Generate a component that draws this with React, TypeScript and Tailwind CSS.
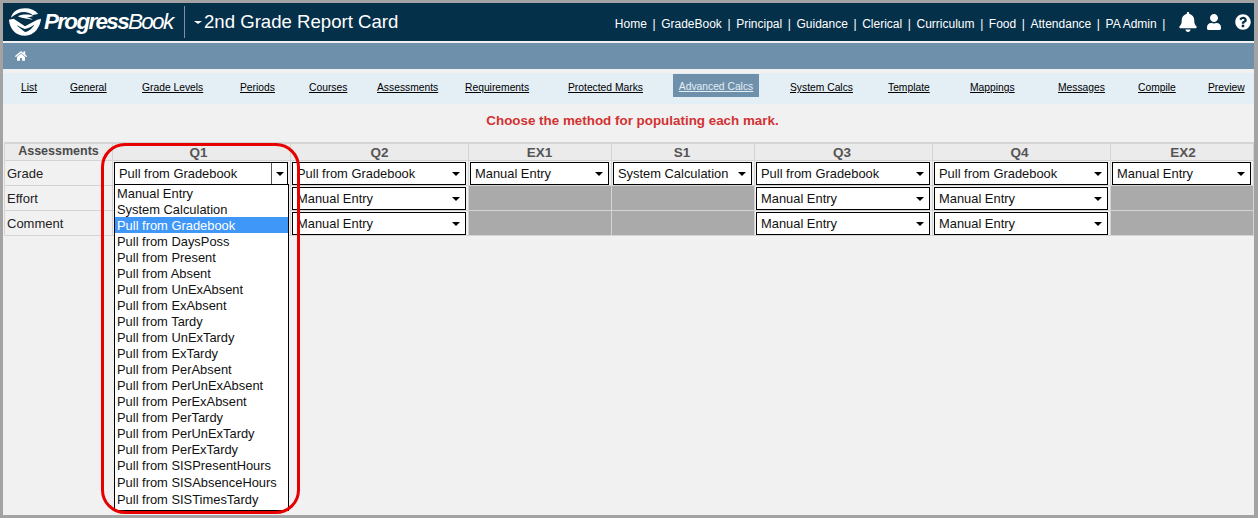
import { FaBell, FaHome, FaQuestionCircle, FaUser } from 'react-icons/fa';

const navLinks = ['Home', 'GradeBook', 'Principal', 'Guidance', 'Clerical', 'Curriculum', 'Food', 'Attendance', 'PA Admin'];

const tabs = [
  { label: 'List', className: 'w-[49px]' },
  { label: 'General', className: 'w-[72px]' },
  { label: 'Grade Levels', className: 'w-[98px]' },
  { label: 'Periods', className: 'w-[69px]' },
  { label: 'Courses', className: 'w-[68px]' },
  { label: 'Assessments', className: 'w-[88px]' },
  { label: 'Requirements', className: 'w-[103px]' },
  { label: 'Protected Marks', className: 'w-[110px]' },
  { label: 'Advanced Calcs', className: 'w-[112px]', active: true },
  { label: 'System Calcs', className: 'w-[98px]' },
  { label: 'Template', className: 'w-[82px]' },
  { label: 'Mappings', className: 'w-[88px]' },
  { label: 'Messages', className: 'w-[80px]' },
  { label: 'Compile', className: 'w-[70px]' },
  { label: 'Preview', className: 'w-[40px]' },
];

const columns = [
  { name: 'Q1', grade: 'Pull from Gradebook', rest: true, nudge: 'pr-[6px]' },
  { name: 'Q2', grade: 'Pull from Gradebook', rest: true, nudge: '' },
  { name: 'EX1', grade: 'Manual Entry', rest: false, nudge: 'pr-[1px]' },
  { name: 'S1', grade: 'System Calculation', rest: false, nudge: 'pr-[2px]' },
  { name: 'Q3', grade: 'Pull from Gradebook', rest: true, nudge: 'pr-[3px]' },
  { name: 'Q4', grade: 'Pull from Gradebook', rest: true, nudge: 'pr-[4px]' },
  { name: 'EX2', grade: 'Manual Entry', rest: false, nudge: 'pl-[2px]' },
];

const options = [
  'Manual Entry',
  'System Calculation',
  'Pull from Gradebook',
  'Pull from DaysPoss',
  'Pull from Present',
  'Pull from Absent',
  'Pull from UnExAbsent',
  'Pull from ExAbsent',
  'Pull from Tardy',
  'Pull from UnExTardy',
  'Pull from ExTardy',
  'Pull from PerAbsent',
  'Pull from PerUnExAbsent',
  'Pull from PerExAbsent',
  'Pull from PerTardy',
  'Pull from PerUnExTardy',
  'Pull from PerExTardy',
];

const sisOptions = ['Pull from SISPresentHours', 'Pull from SISAbsenceHours', 'Pull from SISTimesTardy'];

function Logo() {
  return (
    <svg width="34" height="31" viewBox="0 0 36 32" className="shrink-0">
      <path d="M3 11C5 4 11 1 18 1c6 0 11 2 14 6l-6 1c-3-2-6-3-9-3C12 5 8 7 3 11z" fill="white" />
      <path d="M11 9c5-2 11-2 16 0l-7 2c3 0 5 1 6 2-5-1-10-1-15-3z" fill="white" />
      <path d="M1 13l5-1 12 8 13-7 4-1c-1 9-7 18-17 18C8 30 2 23 1 13z" fill="white" />
      <path d="M9 19c4 3 6 5 9 7 4-1 7-3 10-8-3 2-6 4-10 5-3-1-6-3-9-4z" fill="#04304a" />
    </svg>
  );
}

function SelectBox({ value, open }: { value: string; open?: boolean }) {
  return (
    <div className="flex h-[23px] items-center border border-black bg-white pl-1 text-[12.9px] text-[#111]">
      <span className="flex-1 truncate">{value}</span>
      {open ? (
        <span className="flex h-full w-[16px] items-center justify-center border-l border-[#555]">
          <span className="h-0 w-0 border-x-[4px] border-t-[4px] border-x-transparent border-t-black" />
        </span>
      ) : (
        <span className="mr-[3px] flex w-[13px] justify-center">
          <span className="h-0 w-0 border-x-[4px] border-t-[4px] border-x-transparent border-t-black" />
        </span>
      )}
    </div>
  );
}

export default function App() {
  return (
    <div className="relative h-[518px] w-[1258px] overflow-hidden border-y-[3px] border-l-[3px] border-r-[4px] border-[#a3a3a3] bg-[#f1f1f1] font-['Liberation_Sans',Arial,sans-serif]">
      {/* Header */}
      <header className="flex h-[38px] items-center bg-[#04304a] text-white">
        <div className="ml-[5px] flex w-[173px] items-center gap-[2px]">
          <Logo />
          <span className="text-[22.5px] leading-none tracking-[-1.7px] italic">
            <span className="font-bold">Progress</span>Book
          </span>
        </div>
        <div className="ml-[3px] h-[32px] w-px bg-[#7d93a3]" />
        <span className="ml-[9px] h-0 w-0 border-x-[4px] border-t-[3px] border-x-transparent border-t-white" />
        <h1 className="ml-[2px] text-[18.6px] leading-none">2nd Grade Report Card</h1>
        <nav className="mt-[3px] ml-auto flex items-center text-[12px]">
          {navLinks.map((link) => (
            <span key={link} className="flex items-center">
              {link}
              <span className="mx-[5.6px]">|</span>
            </span>
          ))}
        </nav>
        <div className="mr-[3px] ml-[7px] flex items-center">
          <FaBell size={20} />
          <FaUser size={16} className="ml-[8px]" />
          <FaQuestionCircle size={16} className="ml-[13px]" />
        </div>
      </header>

      <div className="mt-[2px] flex h-[26px] items-center bg-[#6f90ab] pl-[12px] text-white">
        <FaHome size={12} />
      </div>

      {/* Tabs */}
      <div className="mt-[4px] flex h-[31px] items-start bg-[#e3eef5] pl-[18px] text-[10.3px] text-black">
        {tabs.map((tab) =>
          tab.active ? (
            <div key={tab.label} className={tab.className}>
              <a className="mt-px -ml-[5px] block h-[23px] w-[86px] bg-[#6f90ab] pt-[5px] text-center text-[#e3eef5] underline">
                {tab.label}
              </a>
            </div>
          ) : (
            <div key={tab.label} className={tab.className}>
              <a className="mt-[7px] block underline">{tab.label}</a>
            </div>
          )
        )}
      </div>

      <p className="mt-[9px] pl-[8px] text-center text-[13.4px] leading-[16px] font-bold text-[#d13232]">
        Choose the method for populating each mark.
      </p>

      {/* Marks table */}
      <div className="mt-[13px] ml-px grid w-[1250px] grid-cols-[109px_178px_178px_143px_143px_178px_178px_143px] grid-rows-[17px_25px_25px_25px] border-t-2 border-[#d4d4d4] text-[13px] text-[#222]">
        <div className="border-r border-b border-l border-[#d4d4d4] bg-[#ebebeb] text-center text-[12.5px] leading-[15px] font-bold text-[#4a4a4a]">
          Assessments
        </div>
        {columns.map((col) => (
          <div key={col.name} className={`border-r border-b border-[#d4d4d4] bg-[#ebebeb] pt-px text-center text-[13.5px] leading-[16px] font-bold text-[#555] ${col.nudge}`}>
            {col.name}
          </div>
        ))}
        {['Grade', 'Effort', 'Comment'].map((row) => (
          <div key={row} className="contents">
            <div className="flex items-center border-r border-b border-l border-[#d4d4d4] pt-px pl-[2px]">{row}</div>
            {columns.map((col) =>
              row === 'Grade' || col.rest ? (
                <div key={col.name} className="border-r border-b border-[#d4d4d4] pt-px pr-[2px] pl-px">
                  {/* Q1's lower selects sit behind the open list, so they show no text */}
                  <SelectBox
                    value={row === 'Grade' ? col.grade : col.name === 'Q1' ? '' : 'Manual Entry'}
                    open={row === 'Grade' && col.name === 'Q1'}
                  />
                </div>
              ) : (
                <div key={col.name} className="border-r border-b border-[#d4d4d4] bg-[#aaaaaa]" />
              )
            )}
          </div>
        ))}
      </div>

      {/* Open dropdown */}
      <ul className="absolute top-[181px] left-[111px] h-[327px] w-[175px] border border-black bg-white text-[12.9px] leading-[14px] text-[#111]">
        {options.map((option) => (
          <li key={option} className={option === 'Pull from Gradebook' ? 'h-[16px] bg-[#3f98f8] pt-[2px] pl-[2px] text-white' : 'h-[16px] pt-[2px] pl-[2px]'}>
            {option}
          </li>
        ))}
        {sisOptions.map((option) => (
          <li key={option} className="h-[17px] pt-[2px] pl-[2px]">
            {option}
          </li>
        ))}
      </ul>

      {/* Callout */}
      <div className="pointer-events-none absolute top-[140px] left-[98px] h-[371px] w-[199px] rounded-[24px] border-[3px] border-[#e60000]" />
    </div>
  );
}
